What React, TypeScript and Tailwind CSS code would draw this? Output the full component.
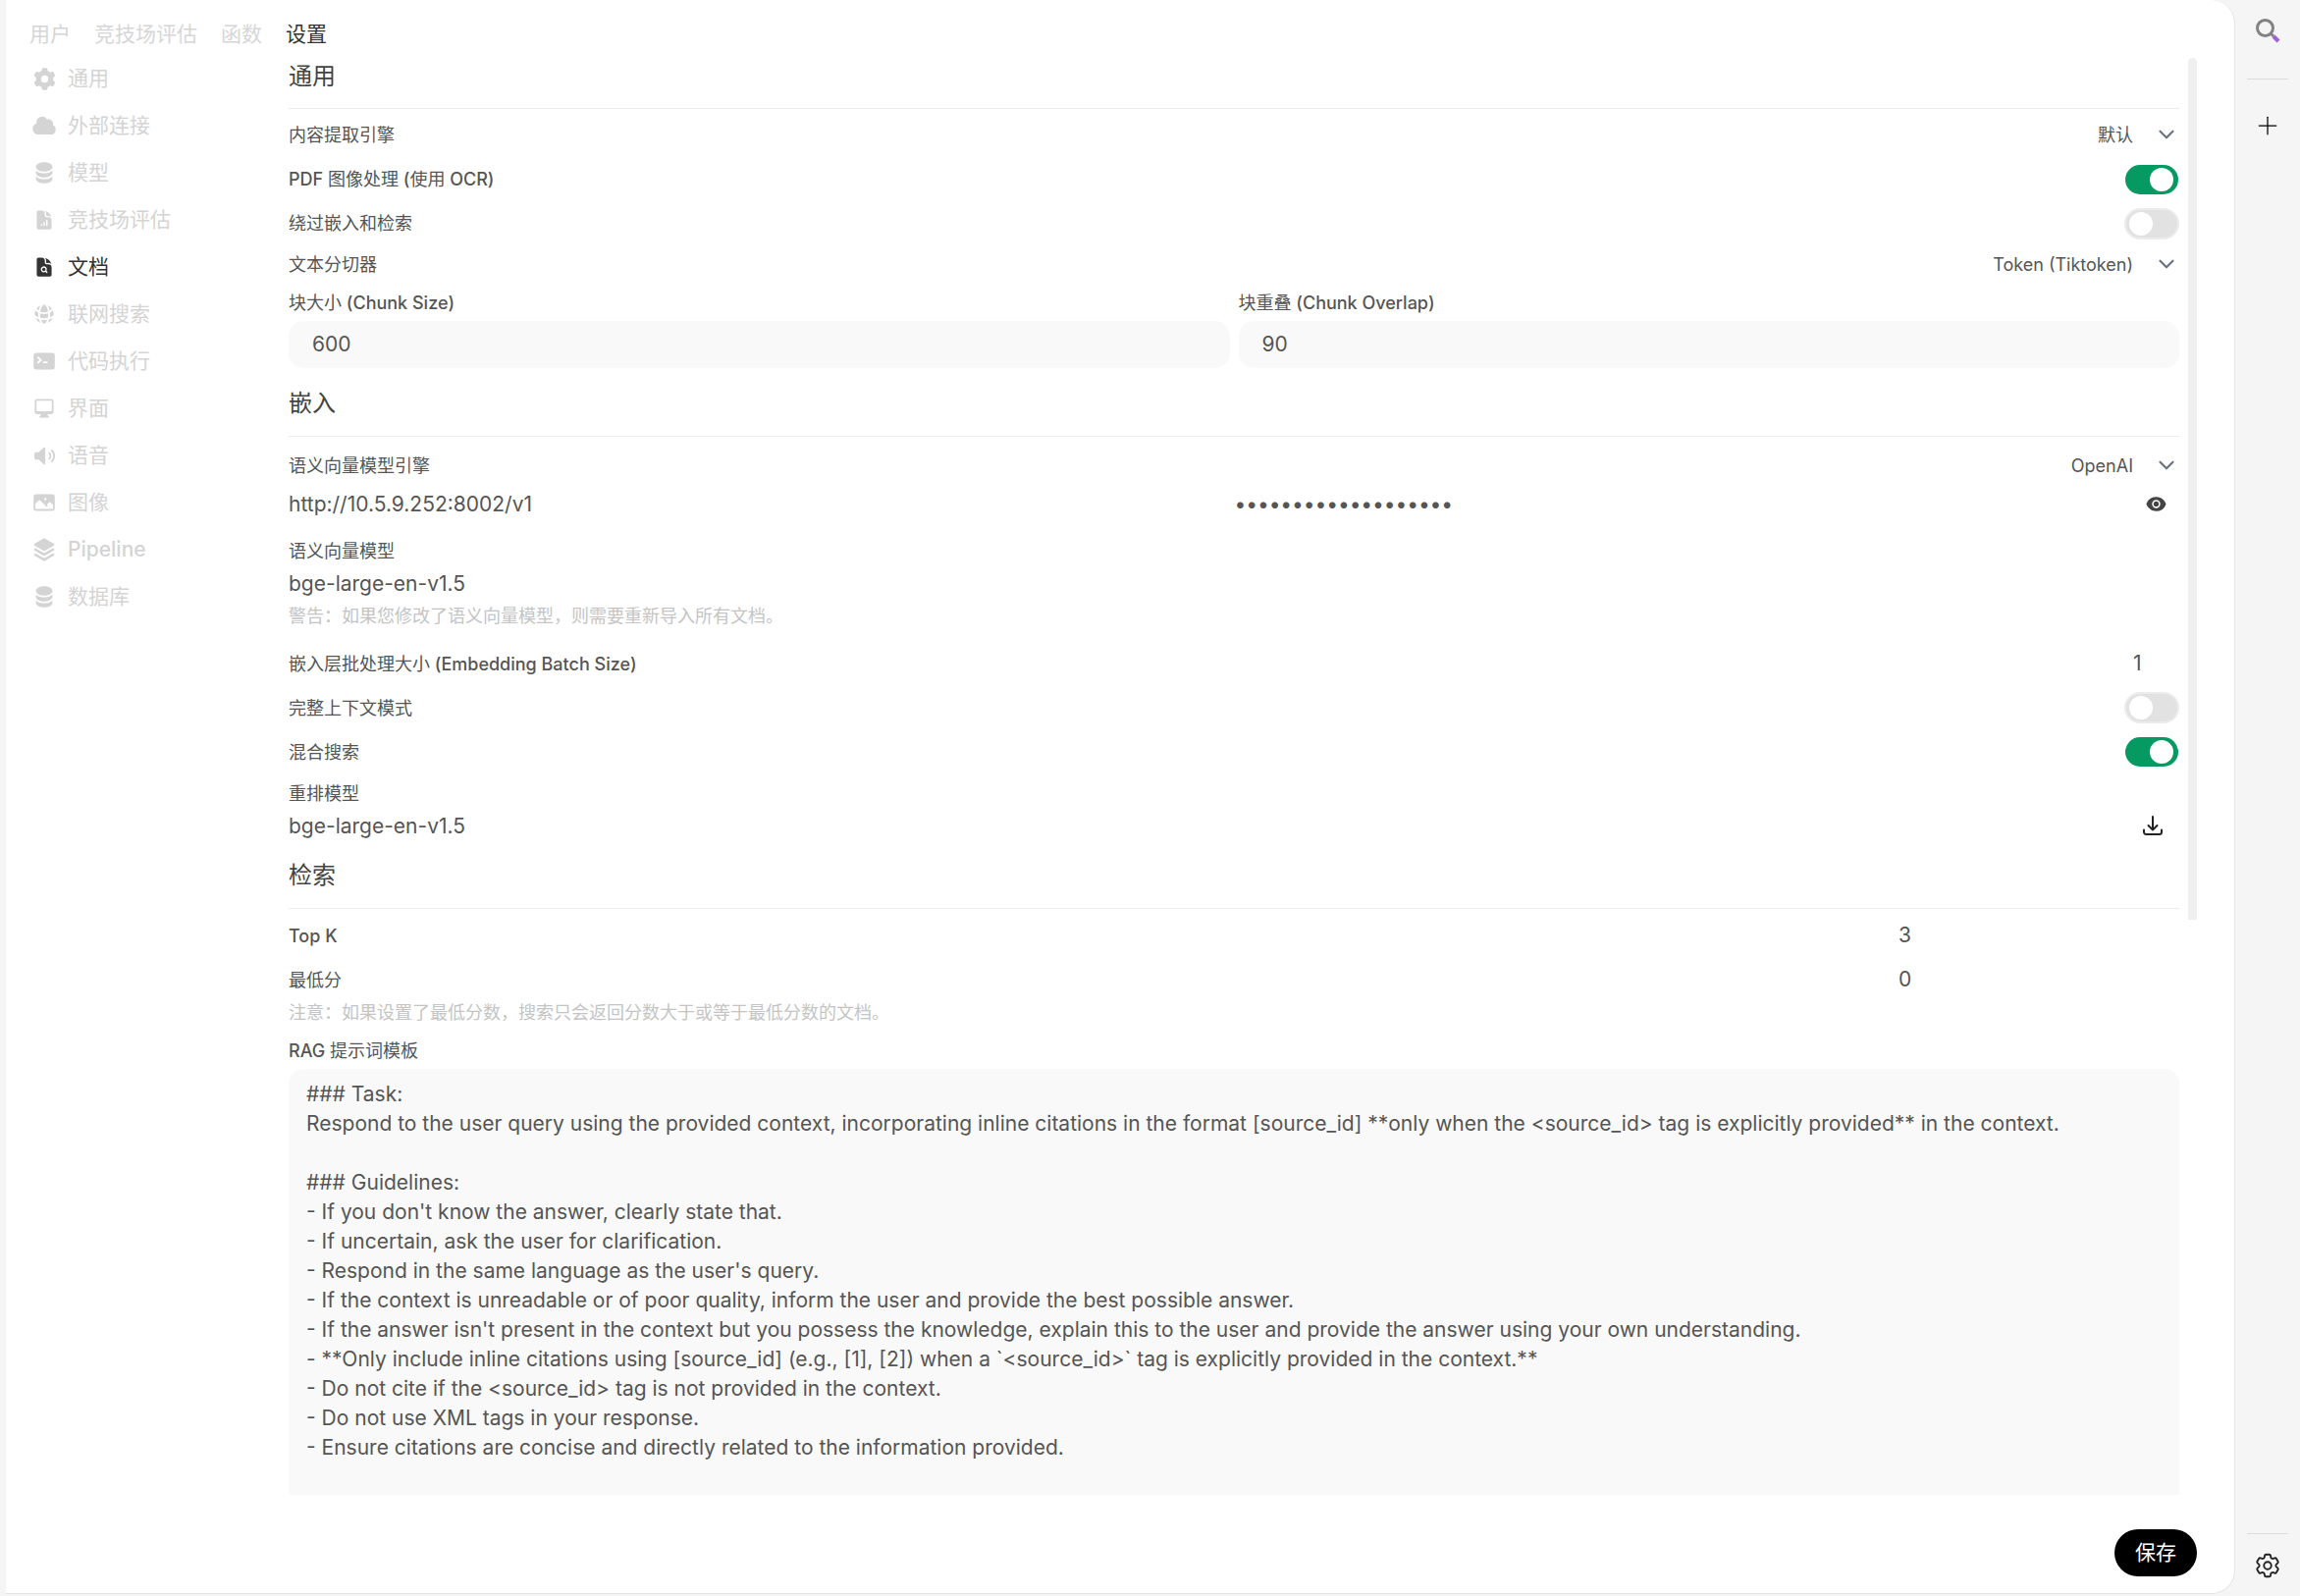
import React from 'react';
import { ChevronDown, Plus } from 'lucide-react';
import {
  HiMiniCog6Tooth,
  HiMiniCloud,
  HiMiniCircleStack,
  HiDocumentChartBar,
  HiDocumentMagnifyingGlass,
  HiMiniGlobeAlt,
  HiMiniCommandLine,
  HiMiniComputerDesktop,
  HiMiniSpeakerWave,
  HiMiniPhoto,
  HiMiniSquare3Stack3D,
  HiMiniEye,
  HiOutlineArrowDownTray,
  HiOutlineCog6Tooth,
} from 'react-icons/hi2';

const tabs = ['用户', '竞技场评估', '函数', '设置'];

const navItems = [
  { icon: HiMiniCog6Tooth, label: '通用', size: 25 },
  { icon: HiMiniCloud, label: '外部连接', size: 26 },
  { icon: HiMiniCircleStack, label: '模型', size: 24 },
  { icon: HiDocumentChartBar, label: '竞技场评估', size: 22 },
  { icon: HiDocumentMagnifyingGlass, label: '文档', active: true, size: 22 },
  { icon: HiMiniGlobeAlt, label: '联网搜索', size: 24 },
  { icon: HiMiniCommandLine, label: '代码执行', size: 24 },
  { icon: HiMiniComputerDesktop, label: '界面', size: 24 },
  { icon: HiMiniSpeakerWave, label: '语音', size: 25 },
  { icon: HiMiniPhoto, label: '图像', size: 24 },
  { icon: HiMiniSquare3Stack3D, label: 'Pipeline', size: 26 },
  { icon: HiMiniCircleStack, label: '数据库', size: 24 },
];

const promptLines = [
  '### Task:',
  'Respond to the user query using the provided context, incorporating inline citations in the format [source_id] **only when the <source_id> tag is explicitly provided** in the context.',
  '',
  '### Guidelines:',
  "- If you don't know the answer, clearly state that.",
  '- If uncertain, ask the user for clarification.',
  "- Respond in the same language as the user's query.",
  '- If the context is unreadable or of poor quality, inform the user and provide the best possible answer.',
  "- If the answer isn't present in the context but you possess the knowledge, explain this to the user and provide the answer using your own understanding.",
  '- **Only include inline citations using [source_id] (e.g., [1], [2]) when a `<source_id>` tag is explicitly provided in the context.**',
  '- Do not cite if the <source_id> tag is not provided in the context.',
  '- Do not use XML tags in your response.',
  '- Ensure citations are concise and directly related to the information provided.',
];

// the Latin runs are medium weight, the Chinese ones stay regular
const Mixed = ({ text }: { text: string }) => (
  <>
    {text.split(/([\x20-\x7e]+)/).map((part, index) =>
      index % 2 === 1 ? (
        <span key={index} className="font-medium">
          {part}
        </span>
      ) : (
        part
      )
    )}
  </>
);

const Toggle = ({ on, className = '' }: { on?: boolean; className?: string }) =>
  on ? (
    <div className={`mr-[1px] w-[54px] h-[30px] rounded-full bg-[#069a63] flex items-center justify-end pr-[5px] ${className}`}>
      <div className="w-[24px] h-[24px] rounded-full bg-white" />
    </div>
  ) : (
    <div className={`w-[56px] h-[32px] rounded-full bg-[#e2e2e2] border-[2px] border-[#ececec] flex items-center pl-[3px] ${className}`}>
      <div className="w-[24px] h-[24px] rounded-full bg-white" />
    </div>
  );

const Select = ({ value }: { value: string }) => (
  <div className="flex items-center gap-[21px] text-[18px] text-[#555]">
    <span>{value}</span>
    <ChevronDown size={26} strokeWidth={2} className="text-[#6b7280]" />
  </div>
);

const Heading = ({ text, className }: { text: string; className: string }) => (
  <div className={`h-[38px] flex items-center text-[24px] leading-none text-[#444] ${className}`}>{text}</div>
);

const Row = ({ label, children, className }: { label: string; children?: React.ReactNode; className: string }) => (
  <div className={`h-[30px] flex items-center justify-between ${className}`}>
    <div className="text-[18px] text-[#555]">
      <Mixed text={label} />
    </div>
    {children}
  </div>
);

const App = () => {
  return (
    <div
      className="flex w-[2343px] h-[1626px] overflow-hidden bg-[#f5f5f5]"
      style={{ fontFamily: 'Inter, "Noto Sans CJK SC", sans-serif' }}
    >
      <div className="ml-[6px] w-[2271px] h-[1624px] flex flex-col bg-white rounded-r-[24px] border-r border-b border-[#e5e5e5]">
        {/* Tabs */}
        <div className="h-[56px] pt-[20px] pl-[24px] flex gap-[24px] text-[21px] leading-[30px] text-[#d6d6d6]">
          {tabs.map(tab => (
            <div key={tab} className={tab === '设置' ? 'text-[#333]' : ''}>
              {tab}
            </div>
          ))}
        </div>

        <div className="flex h-[1446px]">
          {/* Sidebar */}
          <div className="w-[288px] pl-[27px]">
            {navItems.map(item => (
              <div
                key={item.label}
                className={`h-[48px] flex items-center text-[21px] ${
                  item.active ? 'text-[#333]' : 'text-[#d4d4d4]'
                }`}
              >
                <div className="w-[36px] pr-[12px] flex justify-center">
                  <item.icon size={item.size} className="shrink-0" />
                </div>
                <span>
                  <Mixed text={item.label} />
                </span>
              </div>
            ))}
          </div>

          {/* Content */}
          <div className="w-[1926px] pt-[3px]">
            <Heading text="通用" className="" />
            <div className="mt-[13px] border-t border-[#ececec]" />
            <Row label="内容提取引擎" className="mt-[11px]">
              <Select value="默认" />
            </Row>
            <Row label="PDF 图像处理 (使用 OCR)" className="mt-[15px]">
              <Toggle on className="translate-y-[1px]" />
            </Row>
            <Row label="绕过嵌入和检索" className="mt-[15px]">
              <Toggle className="translate-y-[1px]" />
            </Row>
            <Row label="文本分切器" className="mt-[12px]">
              <Select value="Token (Tiktoken)" />
            </Row>
            <div className="mt-[11px] grid grid-cols-2 gap-[9px]">
              <div>
                <div className="h-[26px] flex items-center text-[18px] text-[#555]">
                  <span>
                    <Mixed text="块大小 (Chunk Size)" />
                  </span>
                </div>
                <div className="mt-[6px] h-[48px] px-[24px] flex items-center rounded-[15px] bg-[#f9f9f9] text-[21px] text-[#555]">
                  600
                </div>
              </div>
              <div>
                <div className="h-[26px] flex items-center text-[18px] text-[#555]">
                  <span>
                    <Mixed text="块重叠 (Chunk Overlap)" />
                  </span>
                </div>
                <div className="mt-[6px] h-[48px] px-[24px] flex items-center rounded-[15px] bg-[#f9f9f9] text-[21px] text-[#555]">
                  90
                </div>
              </div>
            </div>

            <Heading text="嵌入" className="mt-[17px]" />
            <div className="mt-[14px] border-t border-[#ececec]" />
            <Row label="语义向量模型引擎" className="mt-[14px]">
              <Select value="OpenAI" />
            </Row>
            <div className="mt-[9px] h-[30px] grid grid-cols-2 gap-[9px] items-center text-[21px] text-[#555]">
              <div>http://10.5.9.252:8002/v1</div>
              <div className="flex items-center justify-between pr-[13px]">
                <span className="-ml-[4px] tracking-[-0.1px]">•••••••••••••••••••</span>
                <HiMiniEye size={21} className="text-[#444]" />
              </div>
            </div>
            <div className="mt-[20px] h-[26px] flex items-center text-[18px] text-[#555]">语义向量模型</div>
            <div className="mt-[6px] h-[30px] flex items-center text-[21px] text-[#555]">bge-large-en-v1.5</div>
            <div className="mt-[4px] h-[26px] flex items-center text-[18px] text-[#c4c4c4]">
              警告：如果您修改了语义向量模型，则需要重新导入所有文档。
            </div>
            <Row label="嵌入层批处理大小 (Embedding Batch Size)" className="mt-[21px]">
              <div className="w-[47px] text-[21px] text-[#555]">1</div>
            </Row>
            <Row label="完整上下文模式" className="mt-[15px]">
              <Toggle />
            </Row>
            <Row label="混合搜索" className="mt-[15px]">
              <Toggle on />
            </Row>
            <Row label="重排模型" className="mt-[12px]" />
            <div className="mt-[4px] h-[30px] flex items-center justify-between text-[21px] text-[#555]">
              <div>bge-large-en-v1.5</div>
              <HiOutlineArrowDownTray size={24} strokeWidth={2} className="mr-[15px] -translate-y-[1px] text-[#222]" />
            </div>

            <Heading text="检索" className="mt-[16px]" />
            <div className="mt-[14px] border-t border-[#ececec]" />
            <Row label="Top K" className="mt-[12px]">
              <div className="w-[286px] text-[21px] text-[#555]">3</div>
            </Row>
            <Row label="最低分" className="mt-[15px]">
              <div className="w-[286px] text-[21px] text-[#555]">0</div>
            </Row>
            <div className="mt-[5px] h-[26px] flex items-center text-[18px] text-[#c4c4c4]">
              注意：如果设置了最低分数，搜索只会返回分数大于或等于最低分数的文档。
            </div>
            <div className="mt-[13px] h-[26px] flex items-center text-[18px] text-[#555]">
              <span>
                <Mixed text="RAG 提示词模板" />
              </span>
            </div>
            <div className="mt-[6px] h-[434px] overflow-hidden rounded-t-[15px] bg-[#f9f9f9] px-[18px] pt-[11px] text-[21px] leading-[30px] text-[#555]">
              {promptLines.map((line, index) => (
                <div key={index} className="h-[30px] whitespace-pre">
                  {line}
                </div>
              ))}
            </div>
          </div>

          {/* Scrollbar thumb */}
          <div className="ml-[9px] mt-[3px] w-[9px] h-[878px] rounded-t-full bg-[#efefef]" />
        </div>

        {/* Save */}
        <div className="mt-[56px] flex justify-end pr-[38px]">
          <button className="w-[84px] h-[48px] rounded-full bg-black text-[21px] text-white">保存</button>
        </div>
      </div>

      {/* Right rail */}
      <div className="w-[66px] flex flex-col items-center">
        <svg viewBox="0 0 28 28" className="mt-[18px] w-[28px] h-[28px]" fill="none">
          <circle cx="11.5" cy="10.5" r="8" stroke="#828282" strokeWidth="3" />
          <line x1="17" y1="16" x2="20" y2="19" stroke="#828282" strokeWidth="3" />
          <line x1="20" y1="19" x2="25" y2="24" stroke="#a05fdc" strokeWidth="4" />
        </svg>
        <div className="mt-[34px] w-[42px] border-t border-[#dcdcdc]" />
        <Plus size={30} strokeWidth={1} className="mt-[32px] text-black" />
        <div className="mt-auto w-[42px] border-t border-[#dcdcdc]" />
        <HiOutlineCog6Tooth size={30} className="mt-[17px] mb-[16px] text-[#222]" />
      </div>
    </div>
  );
};

export default App;
